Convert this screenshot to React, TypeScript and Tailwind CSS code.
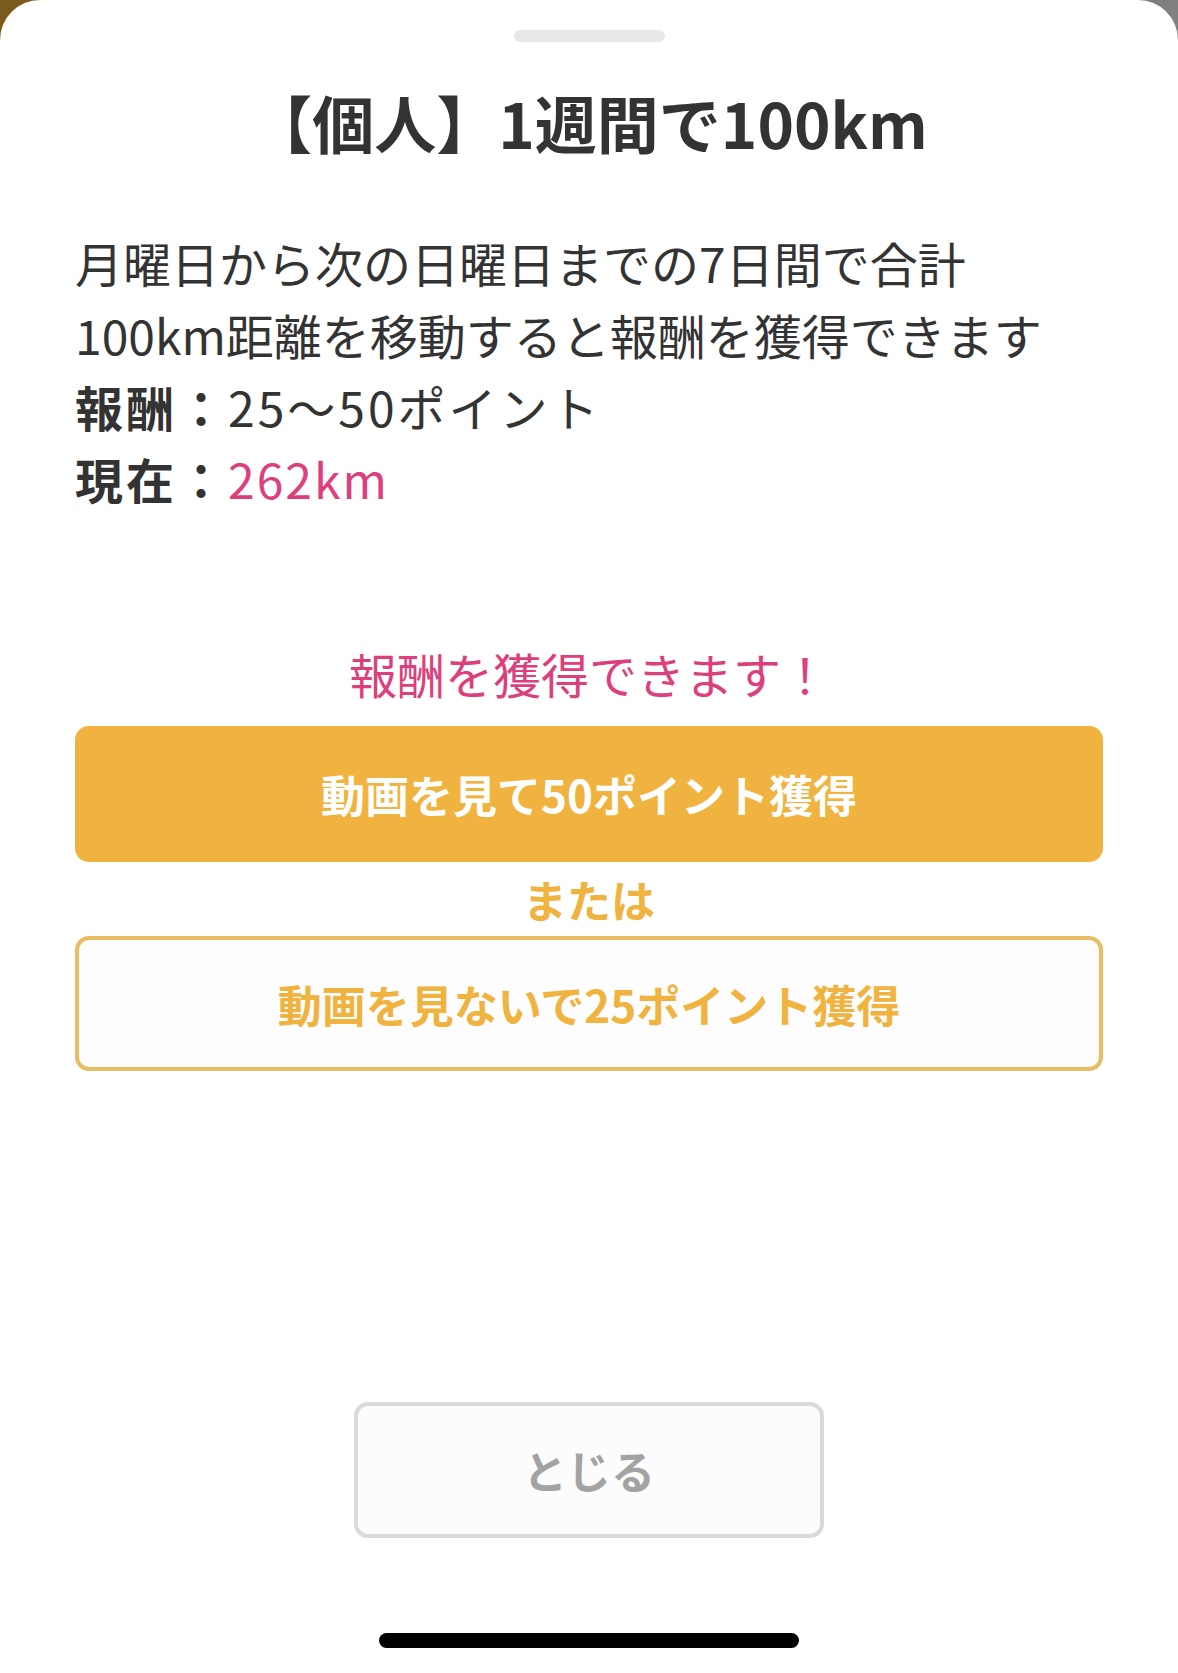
const App = () => {
  return (
    <div className="w-[1178px] h-[1673px] bg-[linear-gradient(to_right,#7b5b1b_50%,#808080_50%)] font-['Noto_Sans_CJK_JP','Noto_Sans',sans-serif]">
      <div className="flex flex-col items-center w-full h-full bg-white rounded-t-[40px] px-[75px]">
        <div className="mt-[30px] w-[151px] h-[12px] rounded-full bg-[#e8e8e8]" />

        <h1 className="mt-[40px] h-[80px] leading-[80px] text-[62px] font-bold text-[#333333] text-center">
          【個人】1週間で100km
        </h1>

        <div className="mt-[64px] w-full text-[48px] leading-[72px] text-[#333333]">
          <p>月曜日から次の日曜日までの7日間で合計</p>
          <p>100km距離を移動すると報酬を獲得できます</p>
          <p>
            <span className="font-bold tracking-[3px]">報酬：</span>
            <span className="tracking-[3px]">25〜50ポイント</span>
          </p>
          <p>
            <span className="font-bold tracking-[3px]">現在：</span>
            <span className="text-[#dc3f7c] tracking-[2px]">262km</span>
          </p>
        </div>

        <p className="mt-[123px] text-[48px] leading-[72px] text-[#dc3f7c] text-center">
          報酬を獲得できます！
        </p>

        <button className="mt-[17px] w-full h-[136px] rounded-[14px] bg-[#f0b33f] text-white text-[44px] font-bold">
          動画を見て50ポイント獲得
        </button>

        <p className="h-[74px] leading-[74px] text-[44px] font-bold text-[#f0b33f]">または</p>

        <button className="w-full h-[135px] rounded-[14px] border-[4px] border-[#e9bd62] bg-[#fdfdfd] text-[#f0b33f] text-[44px] font-bold">
          動画を見ないで25ポイント獲得
        </button>

        <button className="mt-[331px] w-[470px] h-[136px] rounded-[14px] border-[4px] border-[#dadada] bg-[#fcfcfc] text-[#a3a3a3] text-[44px] font-bold">
          とじる
        </button>

        <div className="mt-[95px] w-[420px] h-[15px] rounded-full bg-black" />
      </div>
    </div>
  );
};

export default App;
